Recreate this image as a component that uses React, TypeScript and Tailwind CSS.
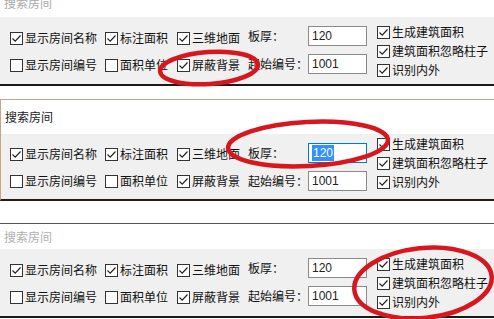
import React from 'react';

const font = { fontFamily: '"Microsoft YaHei", "Noto Sans CJK SC", sans-serif' };

const Check: React.FC<{ checked?: boolean; label: string; className?: string }> = ({ checked, label, className }) => (
  <div className={`flex items-center gap-[2px] ${className || ''}`}>
    <span className="w-[13px] h-[13px] border border-[#333] bg-white flex items-center justify-center shrink-0">
      {checked && (
        <svg width="11" height="11" viewBox="0 0 11 11">
          <path d="M1.5 5.5 L4.2 8.2 L9.5 2.5" fill="none" stroke="#222" strokeWidth="1.2" />
        </svg>
      )}
    </span>
    <span className="text-[12px] leading-[14px] text-[#111] whitespace-nowrap">{label}</span>
  </div>
);

const Field: React.FC<{ value: string; selected?: boolean }> = ({ value, selected }) => (
  <div
    className={`w-[59px] h-[20px] bg-white border flex items-center pl-[3px] text-[12px] ${
      selected ? 'border-[#0078d7]' : 'border-[#8a8a8a]'
    }`}
    style={{ fontFamily: '"Liberation Sans", Arial, sans-serif' }}
  >
    {selected ? <span className="bg-[#3390ff] text-white px-[1px] leading-[16px]">{value}</span> : <span className="text-[#222]">{value}</span>}
  </div>
);

interface PanelProps {
  titleColor: string;
  outer: string;
  titleRow: string;
}

const Panel: React.FC<PanelProps> = ({ titleColor, outer, titleRow }) => (
  <div className={`w-full ${outer}`}>
    <div className={`bg-white flex items-center pl-[4px] text-[12px] ${titleRow} ${titleColor}`}>搜索房间</div>
    <div className="bg-[#f0f0f0] h-[67px] flex">
      <div className="flex flex-col pl-[10px] pt-[14px] gap-[13px]">
        <div className="flex">
          <Check checked label="显示房间名称" className="w-[95px]" />
          <Check checked label="标注面积" className="w-[72px]" />
          <Check checked label="三维地面" className="w-[71px]" />
        </div>
        <div className="flex">
          <Check label="显示房间编号" className="w-[95px]" />
          <Check label="面积单位" className="w-[72px]" />
          <Check checked label="屏蔽背景" className="w-[71px]" />
        </div>
      </div>
      <div className="flex flex-col pt-[9px] gap-[8px]">
        <div className="flex items-center">
          <span className="w-[60px] text-[12px] text-[#111]">板厚：</span>
          <Field value="120" />
        </div>
        <div className="flex items-center">
          <span className="w-[60px] text-[12px] text-[#111]">起始编号：</span>
          <Field value="1001" />
        </div>
      </div>
      <div className="flex flex-col pl-[10px] pt-[8px] gap-[5px]">
        <Check checked label="生成建筑面积" />
        <Check checked label="建筑面积忽略柱子" />
        <Check checked label="识别内外" />
      </div>
    </div>
  </div>
);

export default function App() {
  return (
    <div className="relative w-[494px] h-[319px] overflow-hidden bg-white" style={font}>
      <Panel titleColor="text-[#a8a8a8]" outer="-mt-[11px] border-b-[2px] border-[#1a1a1a]" titleRow="h-[28px]" />
      <div className="mt-[13px] border-t border-l border-[#c9a48a] border-b-[2px] border-b-[#2a1a12]">
        <div className="bg-white h-[34px] flex items-center pl-[4px] text-[12px] text-[#222]">搜索房间</div>
        <div className="bg-[#f0f0f0] h-[65px] flex">
          <div className="flex flex-col pl-[9px] pt-[13px] gap-[13px]">
            <div className="flex">
              <Check checked label="显示房间名称" className="w-[95px]" />
              <Check checked label="标注面积" className="w-[72px]" />
              <Check checked label="三维地面" className="w-[71px]" />
            </div>
            <div className="flex">
              <Check label="显示房间编号" className="w-[95px]" />
              <Check label="面积单位" className="w-[72px]" />
              <Check checked label="屏蔽背景" className="w-[71px]" />
            </div>
          </div>
          <div className="flex flex-col pt-[9px] gap-[8px]">
            <div className="flex items-center">
              <span className="w-[60px] text-[12px] text-[#111]">板厚：</span>
              <Field value="120" selected />
            </div>
            <div className="flex items-center">
              <span className="w-[60px] text-[12px] text-[#111]">起始编号：</span>
              <Field value="1001" />
            </div>
          </div>
          <div className="flex flex-col pl-[10px] pt-[3px] gap-[5px]">
            <Check checked label="生成建筑面积" />
            <Check checked label="建筑面积忽略柱子" />
            <Check checked label="识别内外" />
          </div>
        </div>
      </div>
      <div className="mt-[22px]">
        <Panel titleColor="text-[#b0b0b0]" outer="border-t border-[#555] border-b-[2px] border-b-[#1a1a1a]" titleRow="h-[25px]" />
      </div>

      {/* red annotation rings */}
      <svg className="absolute inset-0 pointer-events-none" width="494" height="319">
        <g fill="none" stroke="#d8161e" strokeWidth="4.5">
          <ellipse cx="209" cy="68" rx="49" ry="16" transform="rotate(-4 209 68)" />
          <ellipse cx="308" cy="144" rx="80" ry="22" transform="rotate(-3 308 144)" />
          <ellipse cx="423" cy="283" rx="69" ry="35" transform="rotate(-6 423 283)" />
        </g>
      </svg>
    </div>
  );
}
